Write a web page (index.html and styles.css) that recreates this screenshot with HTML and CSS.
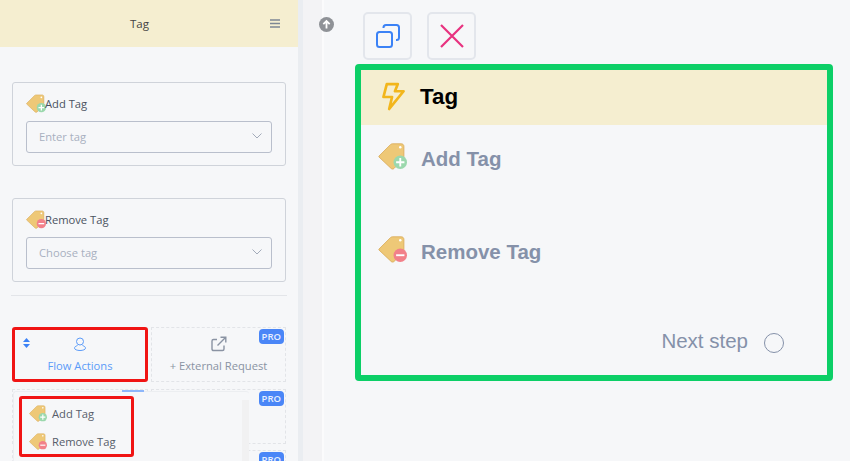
FILE: index.html
```html
<!DOCTYPE html>
<html lang="en">
<head>
    <meta charset="UTF-8">
    <title>Tag</title>
    <link rel="stylesheet" href="styles.css">
</head>

<body>
    <svg class="defs" width="0" height="0">
        <symbol id="tag-shape" viewBox="0 0 28 28">
            <path d="M1 14.500 12 3.500C12.600 3 13.200 2.700 14 2.700H22.500C24 2.700 25 3.700 25 5.200V17L15.500 26.500C14.700 27.300 13.500 27.300 12.700 26.500L1 15.500C.7 15.200 .7 14.800 1 14.500Z" fill="#eec877" stroke="#d9ab58" stroke-width=".8"/>
            <circle cx="21.500" cy="6" r="1.200" fill="#fff"/>
        </symbol>
        <symbol id="tag-add" viewBox="0 0 28 28">
            <use href="#tag-shape"/>
            <circle cx="21.500" cy="20.500" r="6.500" fill="#9bd8ad"/>
            <path d="M21.500 16.500v8M17.500 20.500h8" stroke="#fff" stroke-width="1.800"/>
        </symbol>
        <symbol id="tag-remove" viewBox="0 0 28 28">
            <use href="#tag-shape"/>
            <circle cx="21.500" cy="20.500" r="6.500" fill="#f2808a"/>
            <path d="M17.500 20.500h8" stroke="#fff" stroke-width="1.800"/>
        </symbol>
    </svg>

    <div class="page">
        <aside class="sidebar">
            <header class="side-head">
                <span>Tag</span>
                <svg class="menu-icon" width="11" height="9" viewBox="0 0 11 9"><path d="M0 1h10M0 4.500h10M0 8h10" stroke="#7d8794" stroke-width="1.300"/></svg>
            </header>

            <div class="side-body">
                <div class="field-card">
                    <div class="field-label"><svg width="20" height="20"><use href="#tag-add"/></svg>Add Tag</div>
                    <div class="select">Enter tag
                        <svg width="10" height="6" viewBox="0 0 10 6"><path d="M.5.500 5 5 9.500.500" fill="none" stroke="#a3abba"/></svg>
                    </div>
                </div>

                <div class="field-card">
                    <div class="field-label"><svg width="20" height="20"><use href="#tag-remove"/></svg>Remove Tag</div>
                    <div class="select">Choose tag
                        <svg width="10" height="6" viewBox="0 0 10 6"><path d="M.5.500 5 5 9.500.500" fill="none" stroke="#a3abba"/></svg>
                    </div>
                </div>

                <hr class="divider">

                <div class="tiles">
                    <div class="tile tile-active">
                        <svg class="sort-icon" width="7" height="10" viewBox="0 0 7 10"><path d="M3.500 0 7 4H0ZM3.500 10 0 6h7Z" fill="#3b82f6"/></svg>
                        <svg width="12" height="15" viewBox="0 0 12 15" fill="none" stroke="#5b9bf8"><circle cx="6" cy="4.500" r="3.500"/><path d="M3.500 8.500C1.500 9.200.5 10 .5 11.200c0 1.300 2.500 2.300 5.500 2.300s5.500-1 5.500-2.300c0-1.200-1-2-3-2.700"/></svg>
                        <span>Flow Actions</span>
                    </div>
                    <div class="tile">
                        <b class="pro">PRO</b>
                        <svg width="16" height="16" viewBox="0 0 16 16" fill="none" stroke="#8a93a3" stroke-width="1.400"><path d="M13 9.500V13c0 1-.6 1.500-1.500 1.500h-9C1.600 14.500 1 14 1 13V5c0-1 .6-1.500 1.500-1.500H6M6.500 9.500 14.500 1.500M9.500 1.200h5.300v5.300"/></svg>
                        <span>+ External Request</span>
                    </div>
                    <div class="tile"><b class="pro">PRO</b></div>
                    <div class="tile"><b class="pro">PRO</b></div>
                    <div class="tile"><b class="pro">PRO</b></div>
                    <div class="tile"><b class="pro">PRO</b></div>
                </div>
            </div>

            <div class="action-menu">
                <div class="menu-marked">
                    <div class="menu-item"><svg width="18" height="18"><use href="#tag-add"/></svg>Add Tag</div>
                    <div class="menu-item"><svg width="18" height="18"><use href="#tag-remove"/></svg>Remove Tag</div>
                </div>
            </div>
        </aside>

        <div class="gutter">
            <svg class="up-icon" width="15" height="15" viewBox="0 0 15 15"><circle cx="7.500" cy="7.500" r="7.500" fill="#8f9297"/><path d="M7.500 11.500V4M4.300 7.200 7.500 4l3.200 3.200" fill="none" stroke="#fff" stroke-width="1.800"/></svg>
        </div>

        <main class="canvas">
            <div class="tools">
                <button class="tool-btn">
                    <svg width="24" height="24" viewBox="0 0 24 24" fill="none" stroke="#3b82f6" stroke-width="2"><rect x="1" y="8" width="15" height="15" rx="2.500"/><path d="M7.500 4V3.500C7.500 2 8.500 1 10 1h10.500C22 1 23 2 23 3.500V13.500C23 15 22 16 20.500 16H20"/></svg>
                </button>
                <button class="tool-btn">
                    <svg width="24" height="24" viewBox="0 0 24 24" fill="none" stroke="#e8327f" stroke-width="2.200"><path d="M1 1 23 23M23 1 1 23"/></svg>
                </button>
            </div>

            <section class="node">
                <div class="node-head">
                    <svg width="23" height="29" viewBox="0 0 24 30" fill="none" stroke="#f2b61c" stroke-width="2.800" stroke-linejoin="round"><path d="M5 2H16.500L13.500 9.500H22.500L7.500 28 10.500 15.500H1.500Z"/></svg>
                    <span>Tag</span>
                </div>
                <div class="node-row"><svg width="29" height="29"><use href="#tag-add"/></svg>Add Tag</div>
                <div class="node-row"><svg width="29" height="29"><use href="#tag-remove"/></svg>Remove Tag</div>
                <div class="next-step"><span>Next step</span> <i class="step-dot"></i></div>
            </section>
        </main>
    </div>
</body>
</html>
```

FILE: styles.css
```css
html, body {
    margin: 0;
    height: 100%;
    overflow: hidden;
}

body {
    background-color: #f6f7f9;
    font-family: "Open Sans", sans-serif;
    color: #4a5260;
}

.defs {
    position: absolute;
}

.page {
    display: flex;
    height: 461px;
}

.sidebar {
    position: relative;
    width: 298px;
    flex: none;
    overflow: hidden;
}

.side-head {
    display: flex;
    align-items: center;
    justify-content: center;
    position: relative;
    box-sizing: border-box;
    height: 47px;
    padding-right: 19px;
    background-color: #f5eed0;
    font-size: 11.5px;
    color: #444;
}

.menu-icon {
    position: absolute;
    right: 17px;
    top: 19px;
}

.side-body {
    padding: 35px 12px 0;
}

.field-card {
    box-sizing: border-box;
    height: 84px;
    margin-bottom: 32px;
    padding: 10px 13px 0;
    border: 1px solid #cfd3da;
    border-radius: 3px;
}

.field-label {
    display: flex;
    align-items: center;
    height: 20px;
    font-size: 11.200px;
    color: #4a5260;
}

.field-label svg {
    margin-right: -1px;
}

.select {
    display: flex;
    align-items: center;
    justify-content: space-between;
    box-sizing: border-box;
    height: 32px;
    margin-top: 8px;
    padding: 0 9px 2px 12px;
    border: 1.500px solid #b9bfcc;
    border-radius: 3px;
    font-size: 11.200px;
    color: #a8b0c0;
}

.divider {
    margin: -19px -1px 0;
    border: 0;
    border-top: 1px solid #e3e5e9;
}

.tiles {
    display: grid;
    grid-template-columns: 136px 135px;
    grid-auto-rows: 55px;
    gap: 6.500px 3px;
    margin-top: 31px;
}

.tile {
    position: relative;
    display: flex;
    flex-direction: column;
    align-items: center;
    justify-content: flex-end;
    gap: 6px;
    box-sizing: border-box;
    padding-bottom: 8px;
    border: 1px dashed #e2e4e8;
    font-size: 11.200px;
    color: #8a93a3;
}

.tile-active {
    border: 3px solid #f01414;
    border-radius: 3px;
    padding-bottom: 6px;
    color: #5b9bf8;
}

.sort-icon {
    position: absolute;
    left: 8px;
    top: 8px;
}

.pro {
    position: absolute;
    top: 1px;
    right: 1px;
    padding: 0 3px;
    background-color: #4a86f7;
    border-radius: 4px;
    font-size: 9.500px;
    font-weight: 600;
    line-height: 15px;
    color: #e8f0ff;
}

/* dropdown sits over the tile grid */
.action-menu {
    position: absolute;
    left: 13px;
    top: 391px;
    box-sizing: border-box;
    width: 236px;
    height: 70px;
    padding: 4px 0 0 5px;
    background-color: #f6f7f9;
    border-top: 1px solid #eceef1;
    border-left: 1px solid #eceef1;
    border-radius: 3px 3px 0 0;
}

.action-menu::before {
    content: "";
    position: absolute;
    left: 108px;
    top: -2px;
    width: 22px;
    height: 2px;
    background-color: #8db6fa;
}

.action-menu::after {
    content: "";
    position: absolute;
    right: 0;
    top: 8px;
    bottom: 0;
    width: 7px;
    background-color: #f1f1f2;
}

.menu-marked {
    box-sizing: border-box;
    width: 115px;
    height: 61px;
    border: 3px solid #f01414;
    border-radius: 3px;
}

.menu-item {
    display: flex;
    align-items: center;
    gap: 5px;
    height: 28px;
    padding-left: 7px;
    font-size: 11.200px;
    color: #565d6a;
}

.gutter {
    box-sizing: border-box;
    width: 33px;
    flex: none;
    padding: 17px 0 0 20px;
    border-left: 5px solid #eaedf1;
    background: linear-gradient(to right, #f3f3f5 0 19px, #fbfbfc 19px 21px, #f6f7f9 21px);
}

.up-icon {
    display: block;
    margin-left: -4px;
}

.canvas {
    flex: 1;
    padding: 12px 17px 0 24px;
}

.tools {
    display: flex;
    gap: 15px;
    margin-left: 8px;
}

.tool-btn {
    display: flex;
    align-items: center;
    justify-content: center;
    box-sizing: border-box;
    width: 49px;
    height: 48px;
    padding: 0;
    background-color: #f6f7f9;
    border: 2px solid #e3e6ec;
    border-radius: 5px;
}

.node {
    position: relative;
    box-sizing: border-box;
    width: 478px;
    height: 317px;
    margin-top: 4px;
    border: 6px solid #0ccf67;
    border-radius: 4px;
    font-family: "Liberation Sans", sans-serif;
}

.node-head {
    display: flex;
    align-items: center;
    gap: 15px;
    height: 55px;
    padding-left: 21px;
    padding-bottom: 2px;
    box-sizing: border-box;
    background-color: #f5eed0;
    font-size: 22.400px;
    font-weight: 700;
    color: #000;
}

.node-row {
    display: flex;
    align-items: center;
    gap: 14px;
    height: 29px;
    margin-top: 19px;
    margin-bottom: 64px;
    padding-left: 17px;
    font-size: 20.500px;
    font-weight: 700;
    color: #8591a9;
}

.node-row svg {
    margin-top: -6px;
}

.next-step {
    position: absolute;
    right: 43px;
    bottom: 18px;
    display: flex;
    align-items: center;
    gap: 16px;
    font-size: 20.500px;
    color: #8591a9;
}

.next-step span {
    padding-bottom: 4px;
}

.step-dot {
    box-sizing: border-box;
    width: 20px;
    height: 20px;
    border: 1.500px solid #8591a9;
    border-radius: 50%;
}
```
